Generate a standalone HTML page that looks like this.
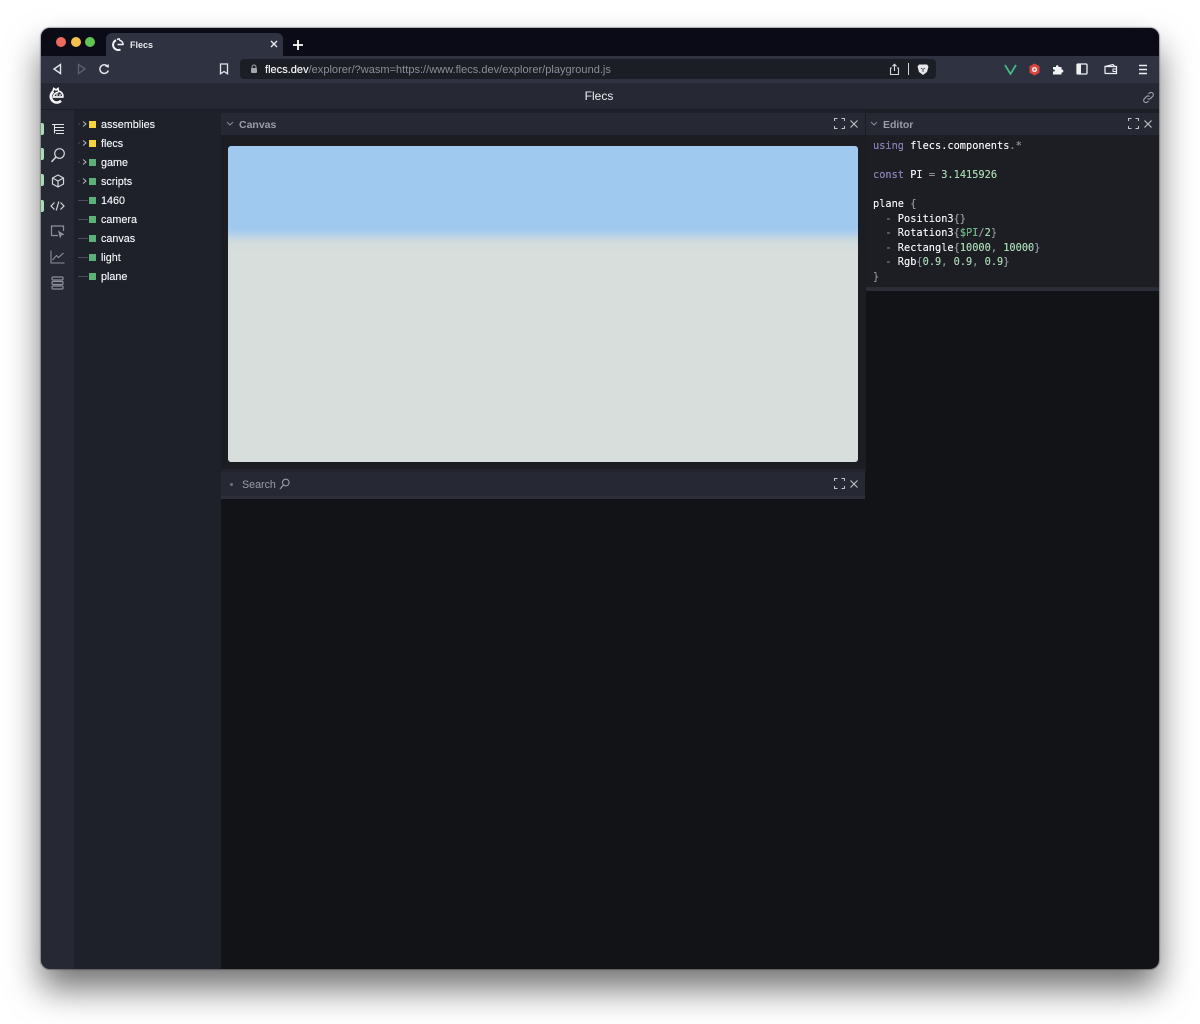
<!DOCTYPE html>
<html><head><meta charset="utf-8"><style>
html,body{margin:0;padding:0;width:1200px;height:1024px;overflow:hidden;background:#fff;font-family:"Liberation Sans",sans-serif}
div,span,svg{position:absolute;box-sizing:border-box}
pre span,.s{position:static}
#win{left:41px;top:28px;width:1118px;height:941px;border-radius:9px;overflow:hidden;background:#121317}
#shadow{left:41px;top:28px;width:1118px;height:941px;border-radius:9px;box-shadow:0 0 1px 1px rgba(0,0,0,.3),0 20px 34px rgba(0,0,0,.55)}
.t{white-space:nowrap;line-height:16px}
.row{left:101px;color:#eceef2;font-size:10.8px;line-height:17px;text-shadow:0 0 .4px #fff}
.sq{left:89px;width:7px;height:7px}
.line{left:78px;width:10px;height:1px;background:#4b4e58}
.hd{background:#262933;height:22px}
.hl{color:#9a9da8;font-size:10.5px;font-weight:bold}
pre{position:absolute;margin:0;left:873px;top:139px;font:10.3px/14.55px "DejaVu Sans Mono",monospace;color:#f2f3f5;text-shadow:0 0 .3px #fff}
.k{color:#7c70b4}.n{color:#9fd6aa}.g{color:#858791}
.i{fill:none;stroke:#d5d7dc;stroke-width:1.2}
</style></head><body>
<div id="shadow"></div>
<div id="win">
<div style="left:0;top:0;width:1118px;height:28px;background:#0a0b16"></div>
<div style="left:65px;top:5px;width:177px;height:23px;background:#2f3241;border-radius:6px 6px 0 0"></div>
<div style="left:0;top:28px;width:1118px;height:27px;background:#2f3241"></div>
<div style="left:199px;top:31px;width:696px;height:20px;background:#1c1e25;border-radius:4px"></div>
<div style="left:0;top:55px;width:1118px;height:27px;background:#262933;border-bottom:1px solid #1b1d24"></div>
<div style="left:0;top:82px;width:33px;height:859px;background:#262933"></div>
<div style="left:33px;top:82px;width:147px;height:859px;background:#1e2129"></div>
<div style="left:180px;top:82px;width:645px;height:363px;background:#1b1d22"></div>
<div style="left:180px;top:82px;width:938px;height:3px;background:#1e2129"></div>
<div style="left:825px;top:82px;width:293px;height:181px;background:#1c1e24"></div>
<div style="left:825px;top:259px;width:293px;height:4px;background:#2a2d38"></div>
<div style="left:180px;top:441px;width:644px;height:30px;background:#262933;border-top:3px solid #22242d;border-bottom:3px solid #2c2f3a"></div>
<div class="hd" style="left:180px;top:85px;width:644px"></div>
<div class="hd" style="left:825px;top:85px;width:293px"></div>
</div>
<div style="left:56px;top:37px;width:10px;height:10px;border-radius:50%;background:#ec6a5e"></div>
<div style="left:71px;top:37px;width:10px;height:10px;border-radius:50%;background:#f4bf4f"></div>
<div style="left:85px;top:37px;width:10px;height:10px;border-radius:50%;background:#61c554"></div>
<svg style="left:112px;top:38px" width="13" height="13" viewBox="0 0 13 13"><path d="M4 2.2A5 5 0 1 0 8.5 11.5" fill="none" stroke="#f2f3f5" stroke-width="2"/><path d="M5 1.500 7 .8 8 2.500A4 4 0 0 1 11 6.500L5.500 6.500" fill="none" stroke="#f2f3f5" stroke-width="1.500"/></svg>
<div class="t" style="left:130px;top:37px;color:#e8e9ec;font-size:9px;font-weight:bold;line-height:16px">Flecs</div>
<svg style="left:270px;top:40px" width="8" height="8"><path d="M1 1 7 7M7 1 1 7" stroke="#e8e9ec" stroke-width="1.400"/></svg>
<svg style="left:293px;top:40px" width="10" height="10"><path d="M5 0V10M0 5H10" stroke="#fff" stroke-width="1.800"/></svg>
<svg style="left:52px;top:63px" width="11" height="12"><path d="M8.500 1.500V10.500L2 6Z" fill="none" stroke="#e4e5e9" stroke-width="1.400"/></svg>
<svg style="left:76px;top:63px" width="11" height="12"><path d="M2.500 1.500V10.500L9 6Z" fill="none" stroke="#60636f" stroke-width="1.300"/></svg>
<svg style="left:98px;top:63px" width="12" height="13"><path d="M10 4A4.300 4.300 0 1 0 10.300 7.500" fill="none" stroke="#e4e5e9" stroke-width="1.500"/><path d="M7 3.500 10.800 4.800V1Z" fill="#e4e5e9"/></svg>
<svg style="left:219px;top:63px" width="10" height="12"><path d="M1.500 1H8.500V10.800L5 8.500 1.500 10.800Z" fill="none" stroke="#e4e5e9" stroke-width="1.300"/></svg>
<svg style="left:250px;top:64px" width="8" height="10"><path d="M2 4V3A2 2 0 0 1 6 3V4" fill="none" stroke="#a5a7ae"/><rect x="1" y="4" width="6" height="5" rx="1" fill="#a5a7ae"/></svg>
<div class="t" style="left:265px;top:62px;font-size:11px;color:#8b8e98;letter-spacing:.02px"><span class="s" style="color:#f0f1f3;text-shadow:0 0 .4px #fff">flecs.dev</span>/explorer/?wasm=https://www.flecs.dev/explorer/playground.js</div>
<svg style="left:889px;top:63px" width="11" height="13"><path d="M3 5H1.500V11.500H9.500V5H8M5.500 8V1.500M3.500 3.300 5.500 1.300 7.500 3.300" fill="none" stroke="#d5d7dc" stroke-width="1.100"/></svg>
<div style="left:908px;top:63px;width:1px;height:12px;background:#d5d7dc"></div>
<svg style="left:917px;top:63px" width="12" height="13"><path d="M2 1.500H10L11.500 3.500 10 9 6 12 2 9 .5 3.500Z" fill="#e5e6ea"/><path d="M4 5 6 6.500 8 5M6 7V9" stroke="#555866" fill="none"/></svg>
<svg style="left:1004px;top:64px" width="13" height="11"><path d="M1 1 6.500 10 12 1" fill="none" stroke="#43b883" stroke-width="1.800"/></svg>
<svg style="left:1029px;top:63px" width="11" height="13"><path d="M5.500 .5 10.500 3.300V9.700L5.500 12.500 .5 9.700V3.300Z" fill="#d9453c"/><circle cx="5.500" cy="6.500" r="2.600" fill="#f3e7e5"/><circle cx="5.500" cy="6.500" r="1.100" fill="#d9453c"/></svg>
<svg style="left:1052px;top:63px" width="12" height="12"><path d="M1 4H4C3.500 1.500 7 1.500 6.500 4H9.500V6.500C12 6 12 10 9.500 9.500V11.500H1V8.500C3.500 9 3.500 6 1 6.500Z" fill="#f2f3f5"/></svg>
<svg style="left:1076px;top:63px" width="12" height="12"><rect x="1" y="1" width="10" height="10" rx="1" fill="none" stroke="#f0f1f3" stroke-width="1.300"/><rect x="1.500" y="1.500" width="3.500" height="9" fill="#f0f1f3"/></svg>
<svg style="left:1104px;top:63px" width="14" height="12"><path d="M1 3.500 9 1.500 10.500 3M1 3.500H12.500V10.500H1.500Q1 10.500 1 10Z" fill="none" stroke="#eeeff2" stroke-width="1.200"/><path d="M13 6H9V8.500H13" fill="none" stroke="#eeeff2"/></svg>
<svg style="left:1138px;top:64px" width="10" height="11"><path d="M1 1.500H9M1 5.500H9M1 9.500H9" stroke="#eeeff2" stroke-width="1.400"/></svg>
<svg style="left:48px;top:87px" width="16" height="18" viewBox="0 0 16 18"><path d="M5.500 4.500A6 6 0 1 0 13 13.800" fill="none" stroke="#f5f5f7" stroke-width="2.600"/><path d="M5 4 5.800 1.500 8 3 10 1.500 10.500 4.200A5 5 0 0 1 14.800 10H5.500C5.800 7 8 5.600 10.500 5.500" fill="none" stroke="#f5f5f7" stroke-width="1.700"/><circle cx="9" cy="8" r=".9" fill="#f5f5f7"/><circle cx="12" cy="8" r=".9" fill="#f5f5f7"/></svg>
<div class="t" style="left:560px;top:88px;width:78px;text-align:center;color:#eceef2;font-size:12px">Flecs</div>
<svg style="left:1142px;top:91px" width="13" height="13"><path d="M5.500 7.500A2.200 2.200 0 0 0 8.700 7.300L10.700 5.300A2.300 2.300 0 0 0 7.500 2L6.500 3M7.500 5.500A2.200 2.200 0 0 0 4.300 5.700L2.300 7.700A2.300 2.300 0 0 0 5.500 11L6.500 10" fill="none" stroke="#a5a7ae" stroke-width="1.100"/></svg>

<div style="left:41px;top:123px;width:3px;height:12px;background:#a9dcb4;border-radius:0 2px 2px 0"></div>
<div style="left:41px;top:148px;width:3px;height:12px;background:#a9dcb4;border-radius:0 2px 2px 0"></div>
<div style="left:41px;top:174px;width:3px;height:12px;background:#a9dcb4;border-radius:0 2px 2px 0"></div>
<div style="left:41px;top:200px;width:3px;height:12px;background:#a9dcb4;border-radius:0 2px 2px 0"></div>
<svg style="left:51px;top:123px" width="14" height="13"><path d="M1 1.500H13M3.500 4.500H13M3.500 7.500H13M5 10.500H13M3.500 1.500V10.500" fill="none" stroke="#e2e3e7" stroke-width="1.100"/></svg>
<svg style="left:50px;top:147px" width="16" height="16"><circle cx="9.500" cy="6.500" r="4.800" class="i"/><path d="M6 10 1.500 14.800" class="i" style="stroke-width:1.500"/></svg>
<svg style="left:51px;top:174px" width="14" height="14"><path d="M7 1 12.500 4V10L7 13 1.500 10V4ZM1.500 4 7 7 12.500 4M7 7V13" class="i"/></svg>
<svg style="left:50px;top:200px" width="15" height="12"><path d="M4.500 2.500 1 6 4.500 9.500M10.500 2.500 14 6 10.500 9.500M8.800 1.500 6.200 10.500" class="i"/></svg>
<svg style="left:50px;top:225px" width="16" height="14"><path d="M8 10.500H1.500V1H13.500V6" fill="none" stroke="#8d9099" stroke-width="1.200"/><path d="M8 5.500 14.500 9.500 11.500 10.500 10 13.500Z" fill="#8d9099"/></svg>
<svg style="left:50px;top:250px" width="15" height="14"><path d="M1 .5V13H14.500M2.500 10 6.500 5.500 8.500 7.500 13.500 3" fill="none" stroke="#8d9099" stroke-width="1.100"/></svg>
<svg style="left:51px;top:276px" width="13" height="14"><rect x="1" y="1" width="11" height="3" rx="1" fill="none" stroke="#8d9099" stroke-width="1.200"/><rect x="1" y="5.500" width="11" height="3" rx="1" fill="none" stroke="#8d9099" stroke-width="1.200"/><rect x="1" y="10" width="11" height="3" rx="1" fill="none" stroke="#8d9099" stroke-width="1.200"/></svg>

<svg style="left:78px;top:120px" width="9" height="8"><path d="M0 4H2" stroke="#4b4e58"/><path d="M5 1.500 8 4 5 6.500" fill="none" stroke="#b5b7bd"/></svg>
<svg style="left:78px;top:139px" width="9" height="8"><path d="M0 4H2" stroke="#4b4e58"/><path d="M5 1.500 8 4 5 6.500" fill="none" stroke="#b5b7bd"/></svg>
<svg style="left:78px;top:158px" width="9" height="8"><path d="M0 4H2" stroke="#4b4e58"/><path d="M5 1.500 8 4 5 6.500" fill="none" stroke="#b5b7bd"/></svg>
<svg style="left:78px;top:177px" width="9" height="8"><path d="M0 4H2" stroke="#4b4e58"/><path d="M5 1.500 8 4 5 6.500" fill="none" stroke="#b5b7bd"/></svg>
<div class="line" style="top:200px"></div><div class="line" style="top:219px"></div><div class="line" style="top:238px"></div><div class="line" style="top:257px"></div><div class="line" style="top:276px"></div>
<div class="sq" style="top:121px;background:#f6d43e"></div><div class="sq" style="top:140px;background:#f6d43e"></div>
<div class="sq" style="top:159px;background:#5cb176"></div><div class="sq" style="top:178px;background:#5cb176"></div><div class="sq" style="top:197px;background:#5cb176"></div><div class="sq" style="top:216px;background:#5cb176"></div><div class="sq" style="top:235px;background:#5cb176"></div><div class="sq" style="top:254px;background:#5cb176"></div><div class="sq" style="top:273px;background:#5cb176"></div>
<div class="t row" style="top:116px;line-height:17px;padding-top:1px">assemblies</div>
<div class="t row" style="top:135px;padding-top:1px">flecs</div>
<div class="t row" style="top:154px;padding-top:1px">game</div>
<div class="t row" style="top:173px;padding-top:1px">scripts</div>
<div class="t row" style="top:192px;padding-top:1px">1460</div>
<div class="t row" style="top:211px;padding-top:1px">camera</div>
<div class="t row" style="top:230px;padding-top:1px">canvas</div>
<div class="t row" style="top:249px;padding-top:1px">light</div>
<div class="t row" style="top:268px;padding-top:1px">plane</div>

<svg style="left:226px;top:121px" width="8" height="6"><path d="M1 1 4 4 7 1" fill="none" stroke="#868994" stroke-width="1.100"/></svg>
<div class="t hl" style="left:239px;top:117px">Canvas</div>
<svg style="left:870px;top:121px" width="8" height="6"><path d="M1 1 4 4 7 1" fill="none" stroke="#868994" stroke-width="1.100"/></svg>
<div class="t hl" style="left:883px;top:117px">Editor</div>
<svg style="left:834px;top:118px" width="11" height="11"><path d="M.5 3V.5H3.500M7.500 .5H10.500V3M10.500 8V10.500H7.500M3.500 10.500H.5V8" fill="none" stroke="#c0c2c8" stroke-width="1.100"/></svg>
<svg style="left:850px;top:120px" width="8" height="8"><path d="M.5 .5 7.500 7.500M7.500 .5 .5 7.500" stroke="#c0c2c8" stroke-width="1.100"/></svg>
<svg style="left:1128px;top:118px" width="11" height="11"><path d="M.5 3V.5H3.500M7.500 .5H10.500V3M10.500 8V10.500H7.500M3.500 10.500H.5V8" fill="none" stroke="#c0c2c8" stroke-width="1.100"/></svg>
<svg style="left:1144px;top:120px" width="8" height="8"><path d="M.5 .5 7.500 7.500M7.500 .5 .5 7.500" stroke="#c0c2c8" stroke-width="1.100"/></svg>

<div style="left:228px;top:146px;width:630px;height:316px;border-radius:3px;background:linear-gradient(to bottom,#9fc9ef 0,#9fc9ef 82px,#aecfec 87px,#c4d6e2 92px,#d4dcdc 98px,#d8dedb 110px,#d8dedb 100%)"></div>

<div style="left:230px;top:483px;width:3px;height:3px;border-radius:50%;background:#6f727c"></div>
<div class="t" style="left:242px;top:477px;color:#9a9da8;font-size:10.7px">Search</div>
<svg style="left:279px;top:478px" width="11" height="12"><circle cx="6.800" cy="4.500" r="3.300" fill="none" stroke="#9a9da8" stroke-width="1.100"/><path d="M4.500 7 1 11" stroke="#9a9da8" stroke-width="1.200"/></svg>
<svg style="left:834px;top:478px" width="11" height="11"><path d="M.5 3V.5H3.500M7.500 .5H10.500V3M10.500 8V10.500H7.500M3.500 10.500H.5V8" fill="none" stroke="#c0c2c8" stroke-width="1.100"/></svg>
<svg style="left:850px;top:480px" width="8" height="8"><path d="M.5 .5 7.500 7.500M7.500 .5 .5 7.500" stroke="#c0c2c8" stroke-width="1.100"/></svg>

<pre><span class="k">using</span> flecs.components<span class="g">.*</span>

<span class="k">const</span> PI <span class="g">=</span> <span class="n">3.1415926</span>

plane <span class="g">{</span>
  <span class="g">-</span> Position3<span class="g">{}</span>
  <span class="g">-</span> Rotation3<span class="g">{</span><span style="color:#5cb176">$PI</span><span class="g">/</span><span class="n">2</span><span class="g">}</span>
  <span class="g">-</span> Rectangle<span class="g">{</span><span class="n">10000</span><span class="g">,</span> <span class="n">10000</span><span class="g">}</span>
  <span class="g">-</span> Rgb<span class="g">{</span><span class="n">0.9</span><span class="g">,</span> <span class="n">0.9</span><span class="g">,</span> <span class="n">0.9</span><span class="g">}</span>
<span class="g">}</span></pre>
</body></html>
